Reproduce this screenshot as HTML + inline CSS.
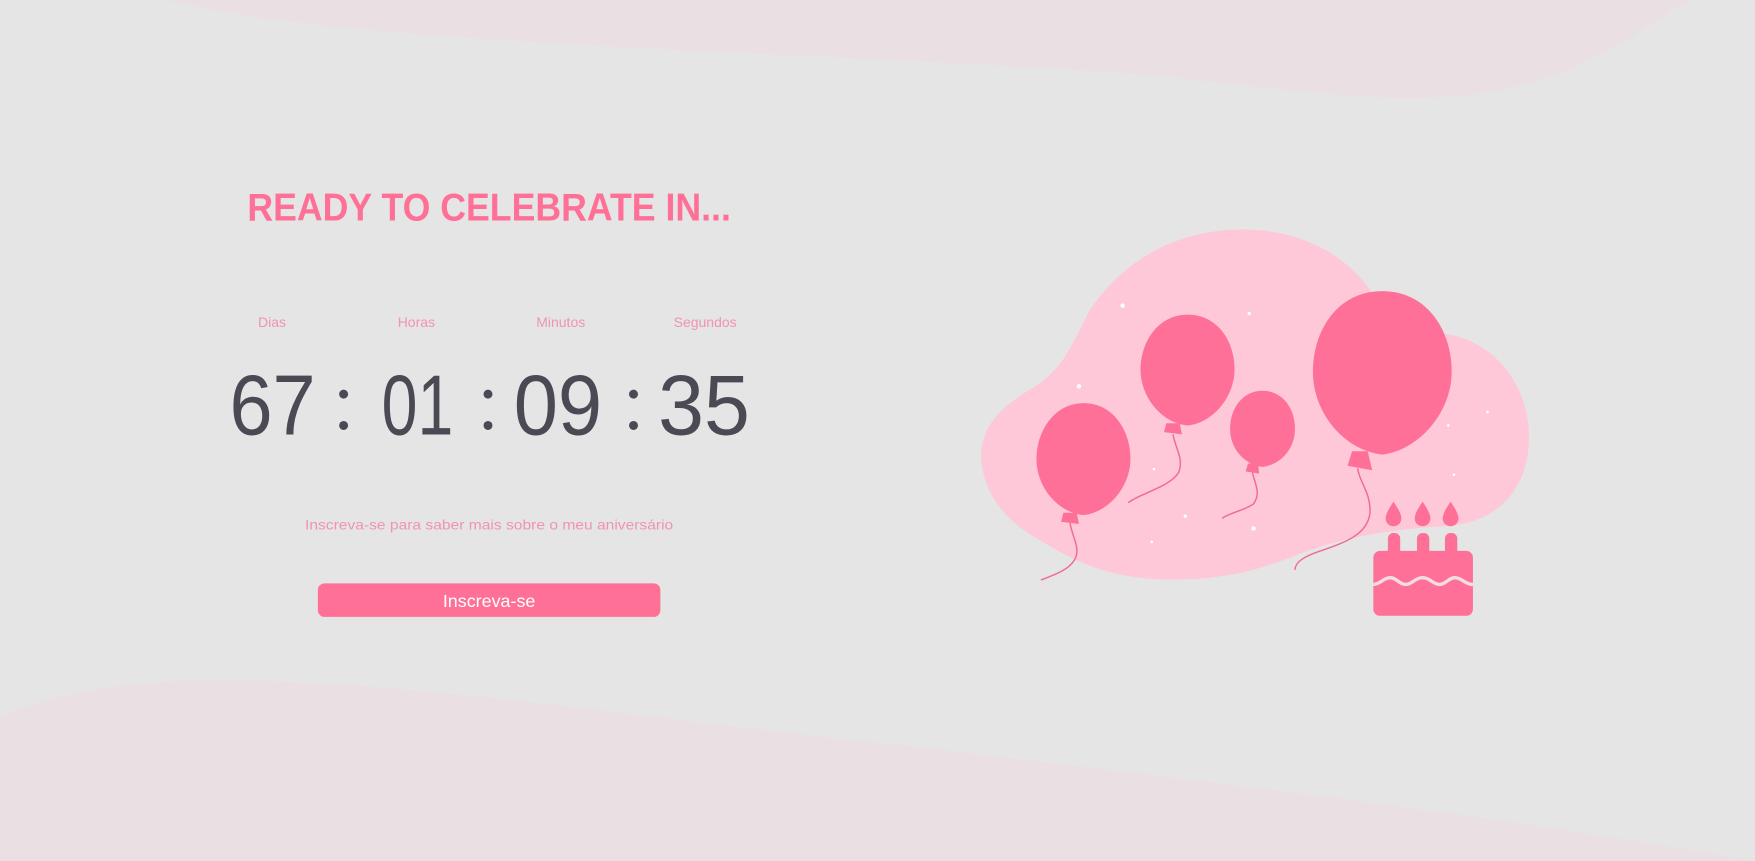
<!DOCTYPE html>
<html><head><meta charset="utf-8"><style>
html,body{margin:0;padding:0;background:#e5e5e5;overflow:hidden}
svg{display:block}
text{font-family:"Liberation Sans",sans-serif}
</style></head><body>
<svg width="1755" height="861" viewBox="0 0 1568 769" preserveAspectRatio="none">
<rect width="1568" height="769" fill="#e5e5e5"/>
<path d="M150 0 C300 40 700 45 1000 65 C1150 78 1230 95 1320 84 C1410 72 1460 30 1510 0 Z" fill="#eadfe3"/>
<path d="M0 640 C60 615 130 606 220 608 C400 612 560 640 800 665 C1100 700 1350 730 1568 769 L0 769 Z" fill="#eadfe3"/>

<text x="437" y="197" font-size="35" font-weight="bold" fill="#ff7096" text-anchor="middle" textLength="432" lengthAdjust="spacingAndGlyphs">READY TO CELEBRATE IN...</text>
<g font-size="12.5" fill="#f094b0" text-anchor="middle">
<text x="243" y="292">Dias</text><text x="372" y="292">Horas</text><text x="501" y="292">Minutos</text><text x="630" y="292">Segundos</text>
</g>
<g font-size="76" fill="#4a4a55">
<text x="205" y="388" textLength="77" lengthAdjust="spacingAndGlyphs">67</text>
<text x="341" y="388" textLength="64" lengthAdjust="spacingAndGlyphs">01</text>
<text x="459" y="388" textLength="79" lengthAdjust="spacingAndGlyphs">09</text>
<text x="588" y="388" textLength="82" lengthAdjust="spacingAndGlyphs">35</text>
</g>
<g fill="#4a4a55"><circle cx="307" cy="352" r="4"/><circle cx="307" cy="380" r="4"/><circle cx="436" cy="352" r="4"/><circle cx="436" cy="380" r="4"/><circle cx="566" cy="352" r="4"/><circle cx="566" cy="380" r="4"/></g>
<text x="437" y="473" font-size="12.5" fill="#f094b0" text-anchor="middle" textLength="329" lengthAdjust="spacingAndGlyphs">Inscreva-se para saber mais sobre o meu aniversário</text>
<rect x="284" y="521" width="306" height="30" rx="6" fill="#ff7096"/>
<text x="437" y="542" font-size="16" fill="#fff" text-anchor="middle">Inscreva-se</text>

<path d="M878 420 C870 380 900 360 925 345 C955 325 960 300 975 275 C1010 225 1060 205 1110 205 C1160 205 1200 225 1225 260 C1240 285 1265 295 1290 298 C1340 305 1368 350 1366 395 C1364 440 1335 468 1290 470 C1240 473 1200 480 1160 495 C1120 512 1080 520 1030 517 C980 514 950 495 925 480 C895 463 882 440 878 420 Z" fill="#fec8d8"/>
<g fill="#fff"><circle cx="1003" cy="273" r="2"/><circle cx="964" cy="345" r="2"/><circle cx="1116" cy="280" r="1.5"/><circle cx="1120" cy="472" r="2"/><circle cx="1059" cy="461" r="1.5"/><circle cx="1029" cy="484" r="1.2"/><circle cx="1294" cy="380" r="1.2"/><circle cx="1299" cy="424" r="1.2"/><circle cx="1329" cy="368" r="1.2"/><circle cx="1031" cy="419" r="1.2"/></g>

<g fill="#ff7098">
<path d="M968 360 C995 360 1010 385 1010 410 C1010 435 990 458 968 460 C945 458 926 435 926 410 C926 385 942 360 968 360 Z"/>
<path d="M950 458 L962 458 L964 468 L948 466 Z"/>
<path d="M1061 281 C1088 281 1103 305 1103 330 C1103 355 1083 378 1061 380 C1038 378 1019 355 1019 330 C1019 305 1035 281 1061 281 Z"/>
<path d="M1042 378 L1054 378 L1056 388 L1040 386 Z"/>
<path d="M1128 349 C1146 349 1157 365 1157 383 C1157 401 1144 415 1128 417 C1112 415 1099 401 1099 383 C1099 365 1110 349 1128 349 Z"/>
<path d="M1115 414 L1124 414 L1125 423 L1113 421 Z"/>
<path d="M1235 260 C1275 260 1297 295 1297 332 C1297 368 1268 402 1235 406 C1200 402 1173 368 1173 332 C1173 295 1195 260 1235 260 Z"/>
<path d="M1208 403 L1222 403 L1226 420 L1204 416 Z"/>
</g>
<g fill="none" stroke="#f06b90" stroke-width="1.3">
<path d="M956 467 C958 480 966 490 960 500 C954 510 940 514 930 518"/>
<path d="M1048 388 C1050 400 1058 410 1053 422 C1045 435 1020 440 1008 449"/>
<path d="M1119 422 C1121 432 1127 440 1120 450 C1112 456 1098 458 1092 463"/>
<path d="M1213 418 C1214 430 1225 440 1224 458 C1222 478 1200 485 1180 492 C1165 497 1157 502 1157 509"/>
</g>
<g fill="#ff7098">
<path d="M1245 448 C1249 454 1252 459 1252 463 C1252 467 1249 470 1245 470 C1241 470 1238 467 1238 463 C1238 459 1241 454 1245 448 Z"/>
<path d="M1271 448 C1275 454 1278 459 1278 463 C1278 467 1275 470 1271 470 C1267 470 1264 467 1264 463 C1264 459 1267 454 1271 448 Z"/>
<path d="M1296 448 C1300 454 1303 459 1303 463 C1303 467 1300 470 1296 470 C1292 470 1289 467 1289 463 C1289 459 1292 454 1296 448 Z"/>
<rect x="1240" y="476" width="11" height="22" rx="5"/>
<rect x="1266" y="476" width="11" height="22" rx="5"/>
<rect x="1291" y="476" width="11" height="22" rx="5"/>
<rect x="1227" y="492" width="89" height="58" rx="6"/>
</g>
<path d="M1227 522 C1233 522 1236 516 1242 516 C1248 516 1250 522 1256 522 C1262 522 1264 516 1271 516 C1278 516 1280 522 1286 522 C1292 522 1294 516 1300 516 C1306 516 1309 522 1316 522" fill="none" stroke="#f2dde3" stroke-width="3"/>
</svg>
</body></html>
